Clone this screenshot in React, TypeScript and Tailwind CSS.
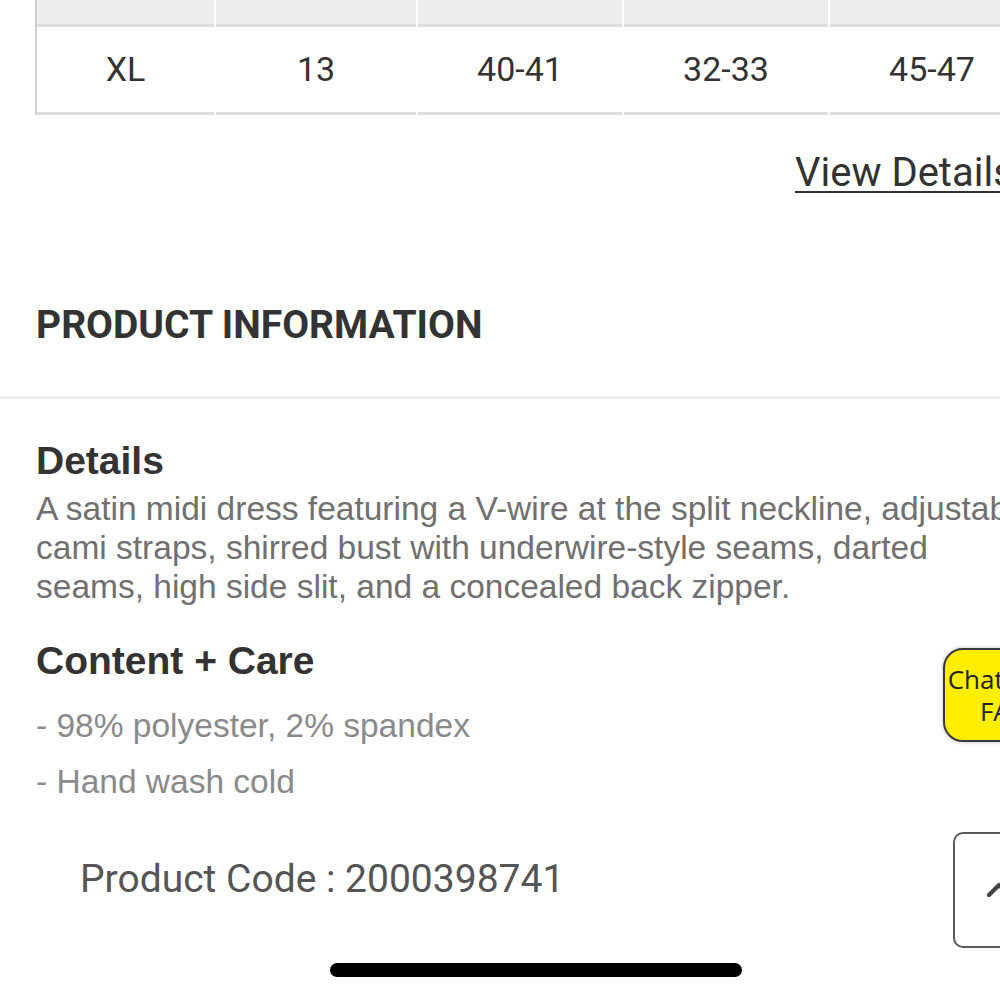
import { ChevronUp } from 'lucide-react';

const sizeRow = ['XL', '13', '40-41', '32-33', '45-47'];
const colWidths = ['w-[177px]', 'w-[200px]', 'w-[204px]', 'w-[204px]', 'w-[204px]'];

const roboto = { fontFamily: 'Roboto, "Liberation Sans", sans-serif' };
const arial = { fontFamily: '"Liberation Sans", Arial, sans-serif' };

export default function App() {
  return (
    <div className="relative w-[1000px] h-[1000px] overflow-hidden bg-white" style={roboto}>
      {/* Size table (last row) */}
      <div className="pl-[35px]">
        <div className="flex w-max border-l-2 border-[#d0d0d0]">
          {sizeRow.map((v, i) => (
            <div key={i} className={`${colWidths[i]} ${i > 0 ? 'ml-[2px]' : ''} flex flex-col`}>
              <div className="h-[27px] bg-[#eeeeee] border-b-[3px] border-[#dcdcdc]" />
              <div className="h-[85px] flex items-center justify-center text-[34px] text-[#333]">{v}</div>
              <div className="h-[3px] bg-[#dcdcdc]" />
            </div>
          ))}
        </div>
      </div>

      {/* View details link */}
      <div className="mt-[34px] pl-[795px] whitespace-nowrap">
        <span className="text-[40px] leading-[48px] text-[#333] underline decoration-2 underline-offset-[5px]">
          View Details
        </span>
      </div>

      {/* Product information heading */}
      <div className="mt-[105px] px-[36px] text-[39px] leading-[46px] font-bold text-[#333]">PRODUCT INFORMATION</div>
      <div className="mt-[48px] h-[3px] bg-[#eeeeee]" />

      <div className="px-[36px] whitespace-nowrap" style={arial}>
        <div className="mt-[39px] text-[39px] leading-[46px] font-bold text-[#333]">Details</div>
        <p className="mt-[5px] text-[33.5px] leading-[39px] text-[#707070]">
          A satin midi dress featuring a V-wire at the split neckline, adjustable
          <br />
          cami straps, shirred bust with underwire-style seams, darted
          <br />
          seams, high side slit, and a concealed back zipper.
        </p>

        <div className="mt-[32px] text-[39px] leading-[46px] font-bold text-[#333]">Content + Care</div>
        <ul className="mt-[22px] flex flex-col gap-[17px] text-[33.5px] leading-[39px] text-[#8a8a8a]">
          <li>- 98% polyester, 2% spandex</li>
          <li>- Hand wash cold</li>
        </ul>
      </div>

      <div className="mt-[55px] pl-[80px] text-[39px] leading-[46px] text-[#555]">Product Code : 2000398741</div>

      {/* Floating chat button */}
      <div
        className="absolute left-[943px] top-[648px] w-[124px] h-[94px] rounded-[20px] border-2 border-[#3a3a3a] bg-[#ffee00] flex flex-col items-center justify-center whitespace-nowrap text-[26px] leading-[32px] font-medium text-[#222] shadow-[0_0_4px_rgba(0,0,0,0.25)]"
        style={{ fontFamily: '"Open Sans", "Liberation Sans", sans-serif' }}
      >
        <span>Chat with</span>
        <span>FAQ</span>
      </div>

      {/* Back to top */}
      <div className="absolute left-[953px] top-[832px] w-[92px] h-[116px] rounded-[10px] border-2 border-[#5a5a5a] bg-white flex items-center justify-center">
        <ChevronUp size={40} strokeWidth={2.5} className="text-[#444]" />
      </div>

      {/* Home indicator */}
      <div className="absolute left-[330px] top-[963px] w-[412px] h-[14px] rounded-full bg-black" />
    </div>
  );
}
